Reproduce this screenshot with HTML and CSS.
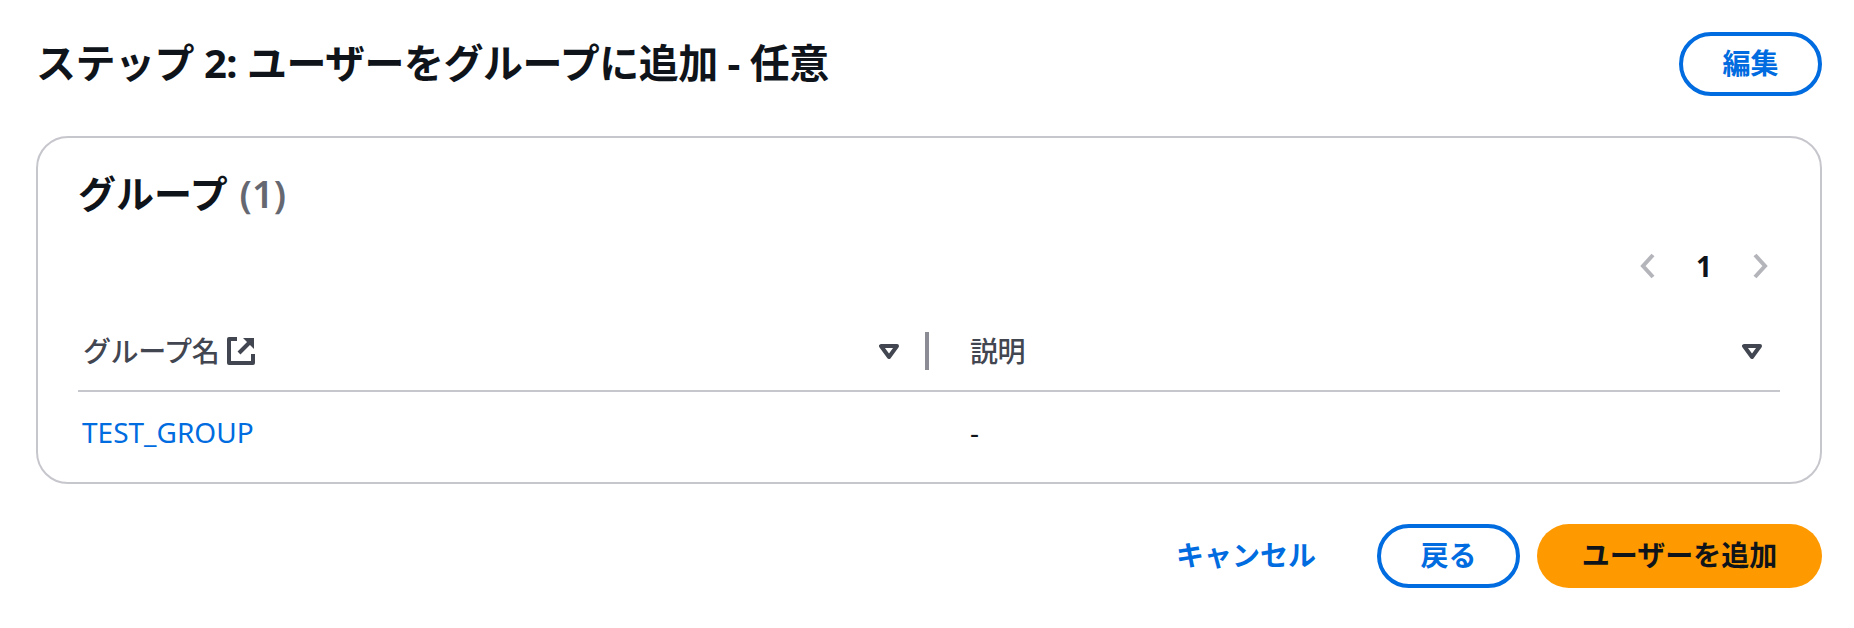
FILE: index.html
```html
<!DOCTYPE html>
<html lang="ja">
<head>
    <meta charset="UTF-8">
    <title>ステップ 2</title>
    <link rel="stylesheet" href="styles.css">
</head>
<body>
    <div class="section-header">
        <h2>ステップ 2: ユーザーをグループに追加 - 任意</h2>
        <button class="btn btn-normal btn-edit">編集</button>
    </div>

    <div class="card">
        <h3 class="card-title">グループ <span class="count">(1)</span></h3>

        <div class="pagination">
            <svg class="chevron" viewBox="0 0 15 26"><path d="M13 2 3 13l10 11"/></svg>
            <span class="page-number">1</span>
            <svg class="chevron" viewBox="0 0 15 26"><path d="M2 2l10 11L2 24"/></svg>
        </div>

        <div class="table-row table-head">
            <div class="cell-head first">
                <span>グループ名</span>
                <svg class="external" viewBox="0 0 28 28">
                    <path class="external-box" d="M10 2H2v24h24v-9"/>
                    <path class="external-arrow" d="M12 16 23 5"/>
                    <path class="external-tip" d="M16 1h11v11z"/>
                </svg>
                <svg class="sort first-sort" viewBox="0 0 20 15"><path d="M2 2h16l-8 11z"/></svg>
                <i class="separator"></i>
            </div>
            <div class="cell-head second">
                <span>説明</span>
                <svg class="sort" viewBox="0 0 20 15"><path d="M2 2h16l-8 11z"/></svg>
            </div>
        </div>

        <div class="table-row table-body">
            <a class="link" href="#">TEST_GROUP</a>
            <span class="second">-</span>
        </div>
    </div>

    <div class="actions">
        <button class="btn-link">キャンセル</button>
        <button class="btn btn-normal btn-back">戻る</button>
        <button class="btn btn-primary">ユーザーを追加</button>
    </div>
</body>
</html>
```

FILE: styles.css
```css
* {
    box-sizing: border-box;
}
body {
    margin: 0;
    padding: 32px 32px 0 36px;
    background: #fff;
    color: #0f141a;
    font-family: "Noto Sans", "Noto Sans CJK JP", sans-serif;
}
.section-header {
    display: flex;
    justify-content: space-between;
    align-items: center;
    height: 64px;
}
h2 {
    margin: 0;
    padding-bottom: 6px;
    font-size: 40px;
    font-weight: 700;
    letter-spacing: -0.5px;
}
.btn {
    height: 64px;
    border-radius: 32px;
    font-family: inherit;
    font-size: 28px;
    font-weight: 700;
    padding: 0 0 4px;
}
.btn-normal {
    background: #fff;
    border: 4px solid #006ce0;
    color: #006ce0;
}
.btn-edit, .btn-back {
    width: 143px;
}
.btn-primary {
    width: 285px;
    background: #ff9900;
    border: none;
    color: #0f141a;
}
.btn-link {
    background: none;
    border: none;
    padding: 0 0 4px;
    font-family: inherit;
    font-size: 28px;
    font-weight: 700;
    color: #006ce0;
}
.card {
    height: 348px;
    margin-top: 40px;
    padding: 0 40px;
    border: 2px solid #c6c6cd;
    border-radius: 32px;
}
.card-title {
    margin: 27px 0 0;
    height: 56px;
    line-height: 56px;
    font-size: 38px;
    font-weight: 700;
}
.count {
    margin-left: 2px;
    color: #656871;
    font-weight: 600;
}
.pagination {
    display: flex;
    justify-content: flex-end;
    align-items: center;
    height: 28px;
    margin-top: 31px;
    padding-right: 12px;
}
.chevron {
    width: 15px;
    height: 26px;
    fill: none;
    stroke: #b4b4bb;
    stroke-width: 4;
}
.page-number {
    width: 98px;
    text-align: center;
    font-size: 28px;
    font-weight: 700;
}
.table-row {
    display: grid;
    grid-template-columns: 851px 1fr;
}
.table-head {
    height: 80px;
    margin-top: 32px;
    align-items: center;
    border-bottom: 2px solid #c6c6cd;
}
.cell-head {
    display: flex;
    align-items: center;
    color: #424650;
    font-size: 28px;
    font-weight: 500;
    letter-spacing: -0.4px;
    line-height: 36px;
}
.cell-head.first {
    padding-left: 5px;
}
.cell-head.second {
    justify-content: space-between;
    padding-right: 18px;
}
.external {
    width: 28px;
    height: 28px;
    margin-left: 8px;
    fill: none;
    stroke: #424650;
    stroke-width: 4;
    stroke-linejoin: round;
}
.external-tip {
    fill: #424650;
    stroke: none;
}
.sort {
    width: 20px;
    height: 15px;
    fill: none;
    stroke: #424650;
    stroke-width: 4;
    stroke-linejoin: round;
}
.first-sort {
    margin-left: auto;
}
.separator {
    width: 4px;
    height: 38px;
    margin-left: 26px;
    background: #8c8c94;
}
.second {
    margin-left: 41px;
}
.table-body {
    align-items: center;
    height: 80px;
    font-size: 28px;
}
.link {
    padding-left: 4px;
    color: #006ce0;
    text-decoration: none;
}
.actions {
    display: flex;
    justify-content: flex-end;
    align-items: center;
    margin-top: 40px;
}
.btn-link {
    margin-right: 61px;
}
.btn-back {
    margin-right: 17px;
}
```
